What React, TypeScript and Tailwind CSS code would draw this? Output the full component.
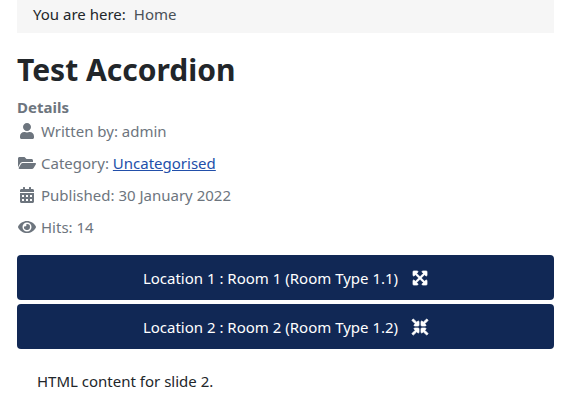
import { useState } from "react";
import {
  FaCalendarAlt,
  FaCompressArrowsAlt,
  FaExpandArrowsAlt,
  FaEye,
  FaFolderOpen,
  FaUser,
} from "react-icons/fa";

const slides = [
  { id: 1, title: "Location 1 : Room 1 (Room Type 1.1)", content: "HTML content for slide 1." },
  { id: 2, title: "Location 2 : Room 2 (Room Type 1.2)", content: "HTML content for slide 2." },
];

const Breadcrumbs = () => (
  <nav aria-label="Breadcrumbs" className="bg-[#f6f6f6] px-4 pt-0.5 pb-[7px]">
    <ol className="flex gap-2">
      <li>You are here:</li>
      <li className="text-[#495057]">Home</li>
    </ol>
  </nav>
);

const ArticleInfo = () => (
  <dl className="mt-1 text-[#6d757e]">
    <dt className="font-bold">Details</dt>
    <dd className="mb-2 flex items-center gap-1">
      <FaUser className="h-4 w-5" />
      <span>Written by: admin</span>
    </dd>
    <dd className="mb-2 flex items-center gap-1">
      <FaFolderOpen className="h-4 w-5" />
      <span>
        Category: <a href="#" className="text-[#224faa] underline">Uncategorised</a>
      </span>
    </dd>
    <dd className="mb-2 flex items-center gap-1">
      <FaCalendarAlt className="h-4 w-5" />
      <span>
        Published: <time dateTime="2022-01-30">30 January 2022</time>
      </span>
    </dd>
    <dd className="flex items-center gap-1">
      <FaEye className="h-4 w-5" />
      <span>Hits: 14</span>
    </dd>
  </dl>
);

const Accordion = () => {
  const [openId, setOpenId] = useState<number | null>(2);

  return (
    <div className="mt-4 flex flex-col gap-1">
      {slides.map((slide) => {
        const isOpen = slide.id === openId;
        const Icon = isOpen ? FaCompressArrowsAlt : FaExpandArrowsAlt;
        return (
          <div key={slide.id}>
            <button
              type="button"
              aria-expanded={isOpen}
              onClick={() => setOpenId(isOpen ? null : slide.id)}
              className="flex h-[45px] w-full items-center justify-center gap-3.5 rounded bg-[#112855] text-white"
            >
              <span>{slide.title}</span>
              <Icon className="size-4 overflow-visible stroke-[24]" />
            </button>
            {isOpen && <div className="p-5">{slide.content}</div>}
          </div>
        );
      })}
    </div>
  );
};

const App = () => (
  <main className="mr-[11px] ml-[17px] font-['Noto_Sans','Open_Sans',sans-serif] text-[15px] leading-6 text-[#22262a]">
    <Breadcrumbs />
    <h1 className="mt-4 text-[30px] leading-[42px] font-bold">Test Accordion</h1>
    <ArticleInfo />
    <Accordion />
  </main>
);

export default App;
